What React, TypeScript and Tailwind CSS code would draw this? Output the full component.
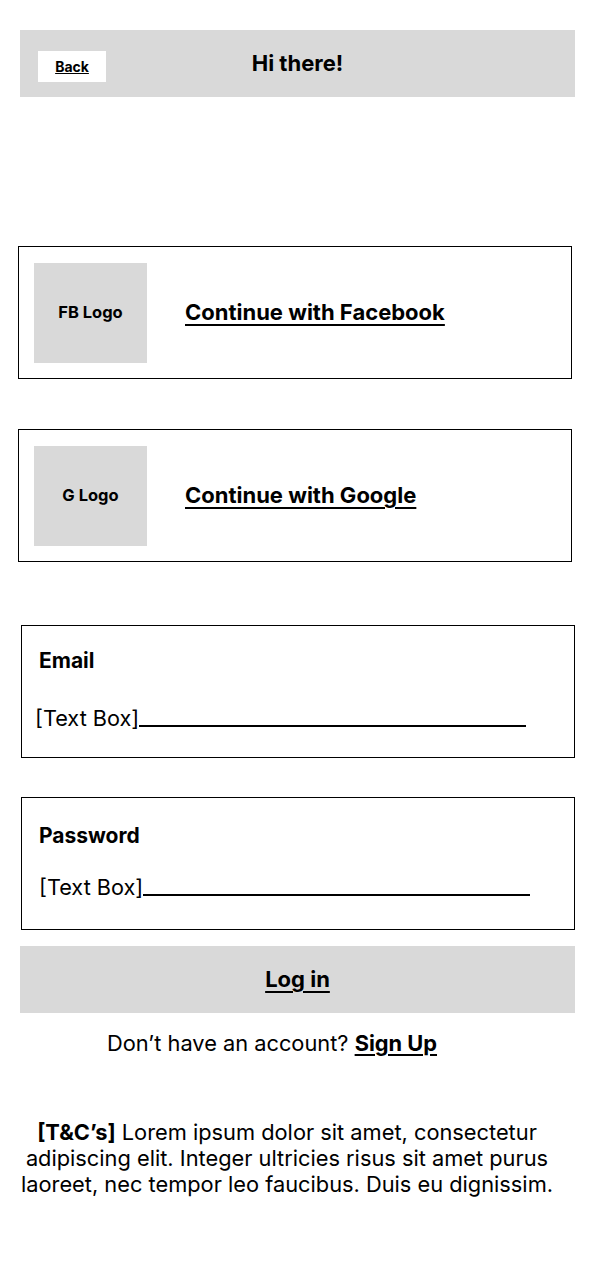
import React from 'react';

function SocialButton({ logo, label }: { logo: string; label: string }) {
  return (
    <div className="ml-[18px] flex h-[133px] w-[554px] items-center border border-black bg-white px-[15px]">
      <div className="flex h-[100px] w-[113px] items-center justify-center bg-[#d9d9d9] text-[16.5px] font-bold">
        {logo}
      </div>
      <span className="ml-[38px] text-[22px] font-bold underline decoration-[2px] underline-offset-[4px]">
        {label}
      </span>
    </div>
  );
}

function Field({ label, labelTop, textTop, textLeft }: { label: string; labelTop: string; textTop: string; textLeft: string }) {
  return (
    <div className="ml-[21px] h-[133px] w-[554px] border border-black">
      <div className={`${labelTop} ml-[17px] text-[21px] leading-[26px] font-bold`}>{label}</div>
      <div className={`${textLeft} ${textTop} flex items-end`}>
        <span className="text-[21.7px] leading-[26px]">[Text Box]</span>
        <span className="mb-[4px] w-[387px] border-b-2 border-black" />
      </div>
    </div>
  );
}

export default function App() {
  return (
    <div
      className="min-h-[1280px] w-[590px] bg-white pt-[30px] text-black"
      style={{ fontFamily: 'Inter, "Noto Sans", sans-serif' }}
    >
      <header className="relative ml-[20px] flex h-[67px] w-[555px] items-center justify-center bg-[#d9d9d9]">
        <button className="absolute left-[18px] top-[21px] flex h-[31px] w-[68px] items-center justify-center bg-white text-[14px] font-bold underline">
          Back
        </button>
        <h1 className="text-[22px] font-bold">Hi there!</h1>
      </header>

      <div className="mt-[149px]">
        <SocialButton logo="FB Logo" label="Continue with Facebook" />
      </div>
      <div className="mt-[50px]">
        <SocialButton logo="G Logo" label="Continue with Google" />
      </div>

      <div className="mt-[63px]">
        <Field label="Email" labelTop="mt-[22px]" textTop="mt-[31px]" textLeft="ml-[13px]" />
      </div>
      <div className="mt-[39px]">
        <Field label="Password" labelTop="mt-[25px]" textTop="mt-[25px]" textLeft="ml-[17px]" />
      </div>

      <button className="ml-[20px] mt-[16px] flex h-[67px] w-[555px] items-center justify-center bg-[#d9d9d9] text-[22px] font-bold underline decoration-[2px] underline-offset-[4px]">
        Log in
      </button>

      <p className="mt-[17px] pl-[107px] text-[21.8px] leading-[26px]">
        Don’t have an account?{' '}
        <span className="font-bold underline decoration-[2px] underline-offset-[3px]">Sign Up</span>
      </p>

      <p className="ml-[14px] mt-[63px] w-[546px] text-center text-[21.8px] leading-[26px]">
        <span className="font-bold">[T&amp;C’s]</span> Lorem ipsum dolor sit amet, consectetur adipiscing elit.
        Integer ultricies risus sit amet purus laoreet, nec tempor leo faucibus. Duis eu dignissim.
      </p>
    </div>
  );
}
